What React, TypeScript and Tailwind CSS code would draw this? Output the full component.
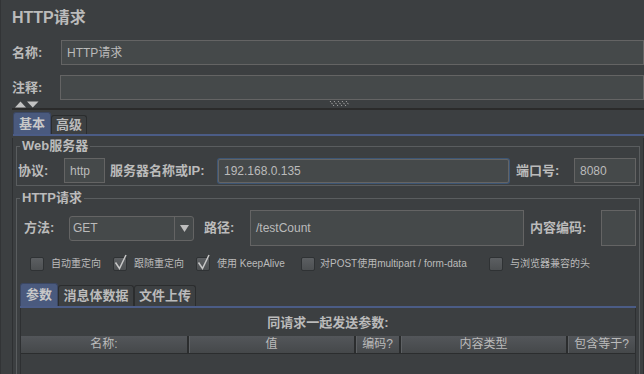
import React from "react";

const FONT = "font-['Liberation_Sans','Noto_Sans_CJK_SC',sans-serif]";

function Label({ children, className = "" }: { children: React.ReactNode; className?: string }) {
  return (
    <span className={`shrink-0 whitespace-nowrap text-[13px] font-bold leading-[16px] text-[#bbbbbb] ${className}`}>
      {children}
    </span>
  );
}

function Field({ children, className = "" }: { children?: React.ReactNode; className?: string }) {
  return (
    <div
      className={`flex shrink-0 items-center border border-[#646464] bg-[#45494a] px-[5px] text-[12px] text-[#bbbbbb] ${className}`}
    >
      {children}
    </div>
  );
}

function CheckBox({ checked = false }: { checked?: boolean }) {
  return (
    <span className="relative h-[14px] w-[14px] shrink-0 rounded-[2px] border border-[#2f3234] bg-linear-to-b from-[#5c5f62] to-[#4d5052]">
      {checked && (
        <svg className="absolute left-[-1px] top-[-4px] overflow-visible" width="16" height="18" viewBox="0 0 16 18">
          <path d="M2.5 8.5 L6.5 14.5 L13 1" fill="none" stroke="#c8c8c8" strokeWidth="1.5" />
        </svg>
      )}
    </span>
  );
}

function Option({ checked, label, className = "", gap = "ml-[7px]" }: { checked?: boolean; label: string; className?: string; gap?: string }) {
  return (
    <div className={`flex shrink-0 items-center ${className}`}>
      <CheckBox checked={checked} />
      <span className={`${gap} whitespace-nowrap text-[10px] leading-[14px] text-[#bbbbbb]`}>{label}</span>
    </div>
  );
}

function Tab({ label, active = false, className = "" }: { label: string; active?: boolean; className?: string }) {
  return (
    <div
      className={`flex items-center justify-center rounded-t-[3px] border border-b-0 text-[13px] font-bold leading-[16px] ${
        active ? "border-[#3b4763] bg-[#4a5a7e] text-[#c8c8c8]" : "border-[#2b2d2e] bg-[#3d4042] text-[#bbbbbb]"
      } ${className}`}
    >
      {label}
    </div>
  );
}

const columns = ["名称:", "值", "编码?", "内容类型", "包含等于?"];

export default function App() {
  return (
    <div className={`h-[374px] w-[644px] overflow-hidden border-l border-[#323436] bg-[#3c3f41] pl-[11px] text-[#bbbbbb] ${FONT}`}>
      <div className="h-[40px] pt-[8px] text-[16px] font-bold leading-[20px]">HTTP请求</div>

      <div className="flex h-[25px] items-center">
        <Label className="w-[49px]">名称:</Label>
        <Field className="h-[25px] flex-1">HTTP请求</Field>
      </div>
      <div className="mt-[10px] flex h-[25px] items-center">
        <Label className="w-[48px]">注释:</Label>
        <Field className="h-[25px] flex-1" />
      </div>

      {/* splitter */}
      <div className="flex h-[10px] items-center border-b-2 border-[#2b2b2b]">
        <svg className="ml-[3px]" width="24" height="7" viewBox="0 0 24 7">
          <path d="M0 6.5 L5.5 0.5 L11 6.5 Z" fill="#c2c2c2" />
          <path d="M12 0.5 L23.5 0.5 L17.75 6.5 Z" fill="#c2c2c2" />
        </svg>
        <svg className="ml-[290px]" width="20" height="6" viewBox="0 0 20 6">
          <path
            d="M1 0 l4 5 M5 0 l4 5 M9 0 l4 5 M13 0 l4 5 M17 0 l3 4"
            stroke="#a4a4a4"
            strokeWidth="1"
            strokeDasharray="1.5 1"
            fill="none"
          />
        </svg>
      </div>

      {/* main tabs */}
      <div className="ml-[1px] flex items-end pt-[2px]">
        <Tab label="基本" active className="h-[22px] w-[38px]" />
        <Tab label="高级" className="h-[19px] w-[36px]" />
      </div>
      <div className="ml-[1px] h-[2px] bg-[#4b5c86]" />

      <div className="border-x border-[#2e3032] px-[3px]">
        <fieldset className="mt-[2px] border border-[#5a5d5f] pb-[2px]">
          <legend className="ml-[3px] px-[2px] text-[13px] font-bold leading-[16px]">Web服务器</legend>
          <div className="mt-[4px] flex h-[25px] items-center pl-[1px] pr-[3px]">
            <Label className="w-[46px]">协议:</Label>
            <Field className="h-[25px] w-[41px]">http</Field>
            <Label className="ml-[5px] w-[108px]">服务器名称或IP:</Label>
            <Field className="h-[24px] w-[291px] rounded-[2px] border-[#5b86bd] shadow-[0_0_0_1px_#3d5675]">192.168.0.135</Field>
            <Label className="ml-[7px] w-[58px]">端口号:</Label>
            <Field className="h-[25px] flex-1 text-[#b4bcc6]">8080</Field>
          </div>
        </fieldset>

        <fieldset className="mt-[4px] border border-[#5a5d5f] pb-[40px]">
          <legend className="ml-[3px] px-[2px] text-[13px] font-bold leading-[16px]">HTTP请求</legend>
          <div className="mt-[4px] flex h-[36px] items-center pl-[7px] pr-[3px]">
            <Label className="w-[45px]">方法:</Label>
            <div className="flex h-[25px] w-[125px] shrink-0 items-center rounded-[3px] border border-[#646464] bg-[#45494a]">
              <span className="flex-1 pl-[3px] text-[12px]">GET</span>
              <span className="flex h-full w-[19px] items-center justify-center border-l border-[#646464]">
                <svg width="9" height="7" viewBox="0 0 9 7">
                  <path d="M0 0 H9 L4.5 7 Z" fill="#bdbdbd" />
                </svg>
              </span>
            </div>
            <Label className="ml-[10px] w-[46px]">路径:</Label>
            <Field className="h-[36px] w-[274px]">/testCount</Field>
            <Label className="ml-[6px] w-[71px]">内容编码:</Label>
            <Field className="h-[36px] flex-1" />
          </div>

          <div className="mt-[8px] flex h-[20px] items-center pl-[13px]">
            <Option label="自动重定向" className="w-[83px]" />
            <Option label="跟随重定向" checked className="w-[83px]" />
            <Option label="使用 KeepAlive" checked className="w-[105px]" />
            <Option label="对POST使用multipart / form-data" className="w-[188px]" gap="ml-[5px]" />
            <Option label="与浏览器兼容的头" />
          </div>

          <div className="mx-[3px] mt-[9px]">
            <div className="flex items-end">
              <Tab label="参数" active className="h-[23px] w-[38px]" />
              <Tab label="消息体数据" className="h-[21px] w-[76px]" />
              <Tab label="文件上传" className="h-[21px] w-[62px]" />
            </div>
            <div className="h-[2px] bg-[#4b5c86]" />
            <div className="h-[80px] border-x border-[#2e3032] pt-[7px]">
              <div className="text-center text-[13px] font-bold leading-[16px]">同请求一起发送参数:</div>
              <div className="mt-[5px] grid h-[18px] grid-cols-[166px_167px_45px_167px_1fr] border-b border-[#2b2d2e] bg-linear-to-b from-[#53565a] to-[#45484a] text-[12px] leading-[17px]">
                {columns.map((c, i) => (
                  <div
                    key={c}
                    className={`text-center ${i > 0 ? "border-l-2 border-[#2b2d2e] shadow-[inset_1px_0_#5e6164]" : ""}`}
                  >
                    {c}
                  </div>
                ))}
              </div>
            </div>
          </div>
        </fieldset>
      </div>
    </div>
  );
}
